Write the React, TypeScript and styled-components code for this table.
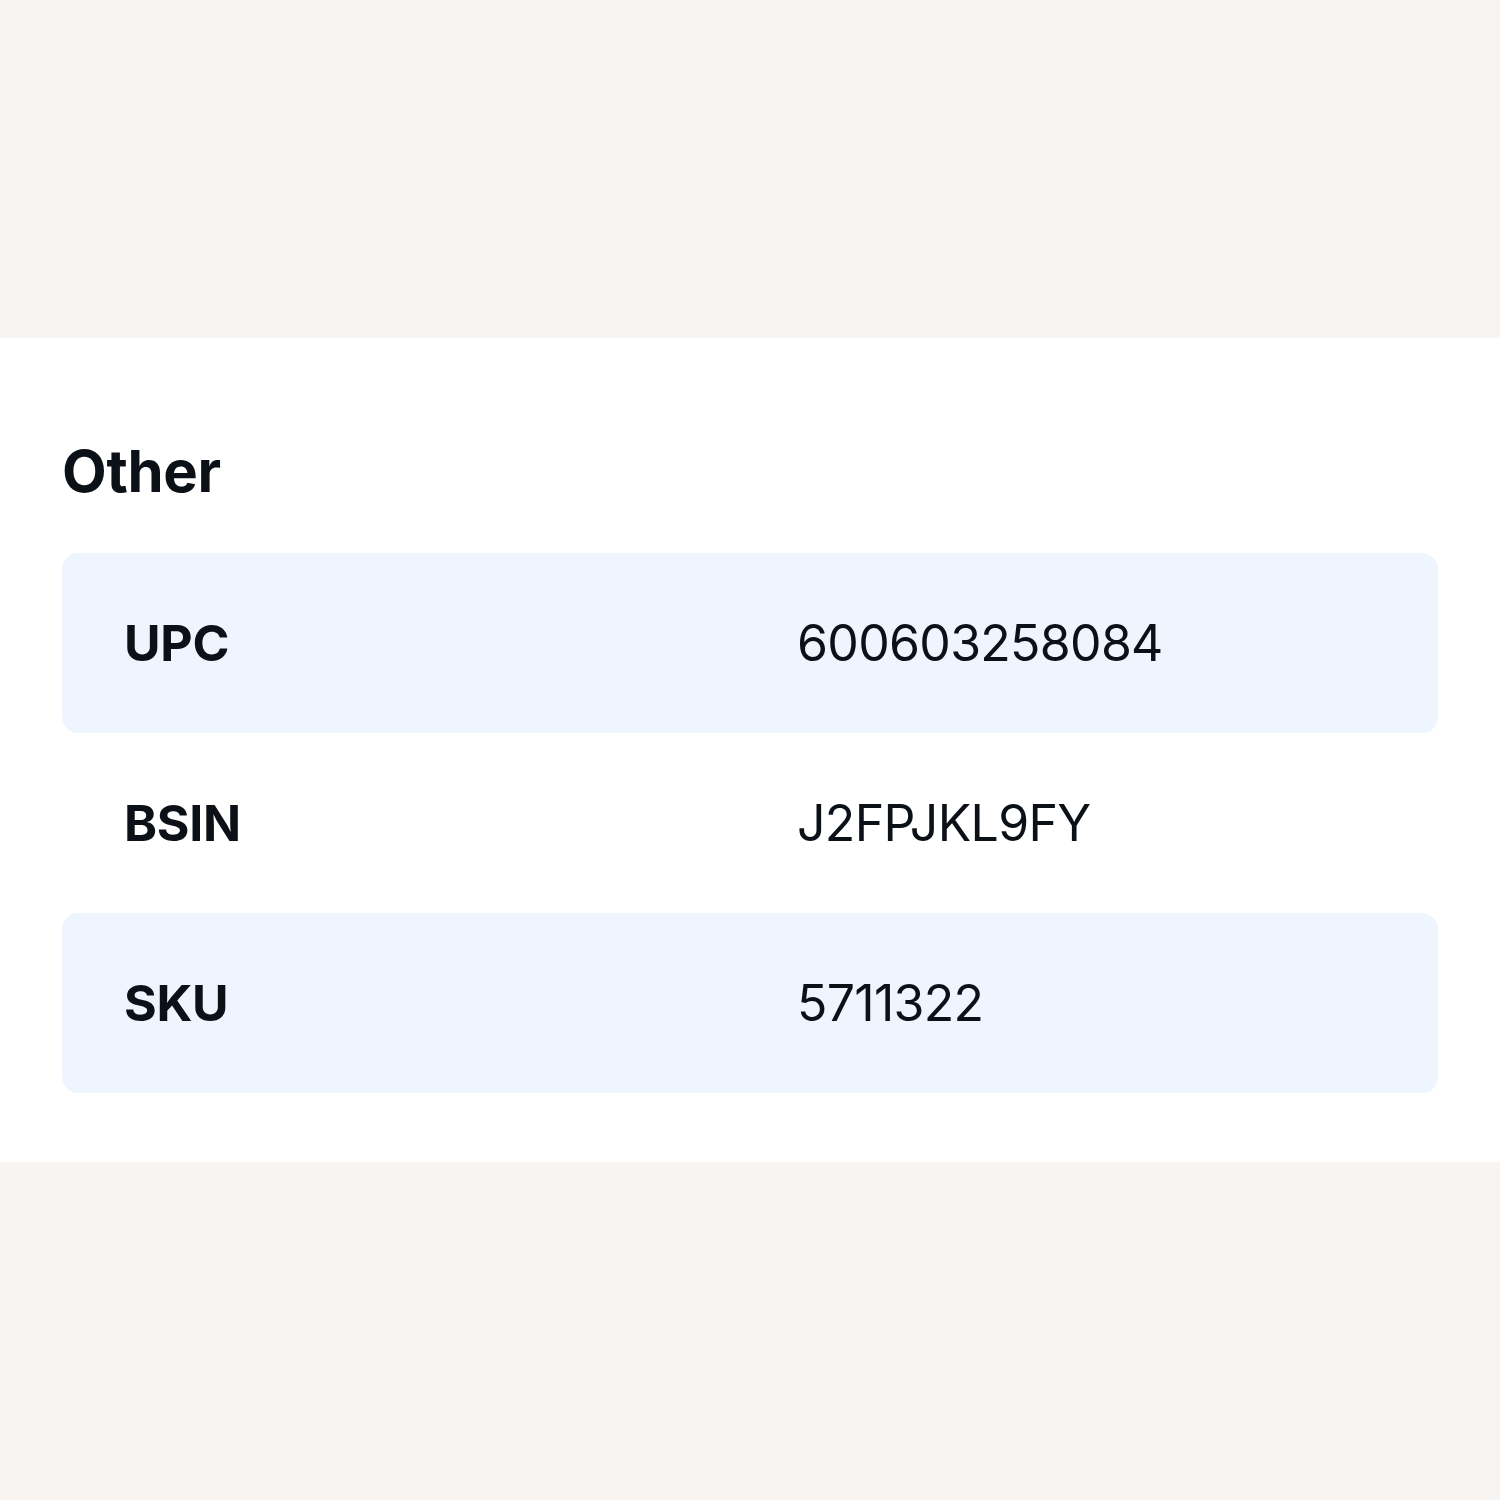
import React from "react";
import styled, { createGlobalStyle } from "styled-components";

const Global = createGlobalStyle`
  html, body { margin: 0; padding: 0; background: #f7f4f1; }
  body { font-family: Inter, "Noto Sans", sans-serif; color: #0c1118; }
`;

const Page = styled.div`
  min-height: 1500px;
  padding-top: 338px;
  box-sizing: border-box;
`;

const Panel = styled.section`
  background: #ffffff;
  padding: 98px 62px 69px;
`;

const Heading = styled.h2`
  margin: 0 0 47px;
  font-size: 58px;
  line-height: 70px;
  font-weight: 700;
  letter-spacing: -0.3px;
  color: #0c1118;
`;

const List = styled.div`
  display: flex;
  flex-direction: column;
`;

const Row = styled.div<{ $shaded: boolean }>`
  display: grid;
  grid-template-columns: 673px 1fr;
  align-items: center;
  height: 180px;
  padding: 0 62px;
  border-radius: 16px;
  background: ${(p) => (p.$shaded ? "#eff5fe" : "transparent")};
`;

const Label = styled.span`
  font-size: 50px;
  font-weight: 700;
  letter-spacing: -0.3px;
  color: #0c1118;
`;

const Value = styled.span`
  font-size: 50px;
  font-weight: 400;
  letter-spacing: -0.7px;
  color: #0c1118;
`;

const rows = [
  { label: "UPC", value: "600603258084" },
  { label: "BSIN", value: "J2FPJKL9FY" },
  { label: "SKU", value: "5711322" },
];

export default function App() {
  return (
    <>
      <Global />
      <Page>
        <Panel>
          <Heading>Other</Heading>
          <List>
            {rows.map((r, i) => (
              <Row key={r.label} $shaded={i % 2 === 0}>
                <Label>{r.label}</Label>
                <Value>{r.value}</Value>
              </Row>
            ))}
          </List>
        </Panel>
      </Page>
    </>
  );
}
